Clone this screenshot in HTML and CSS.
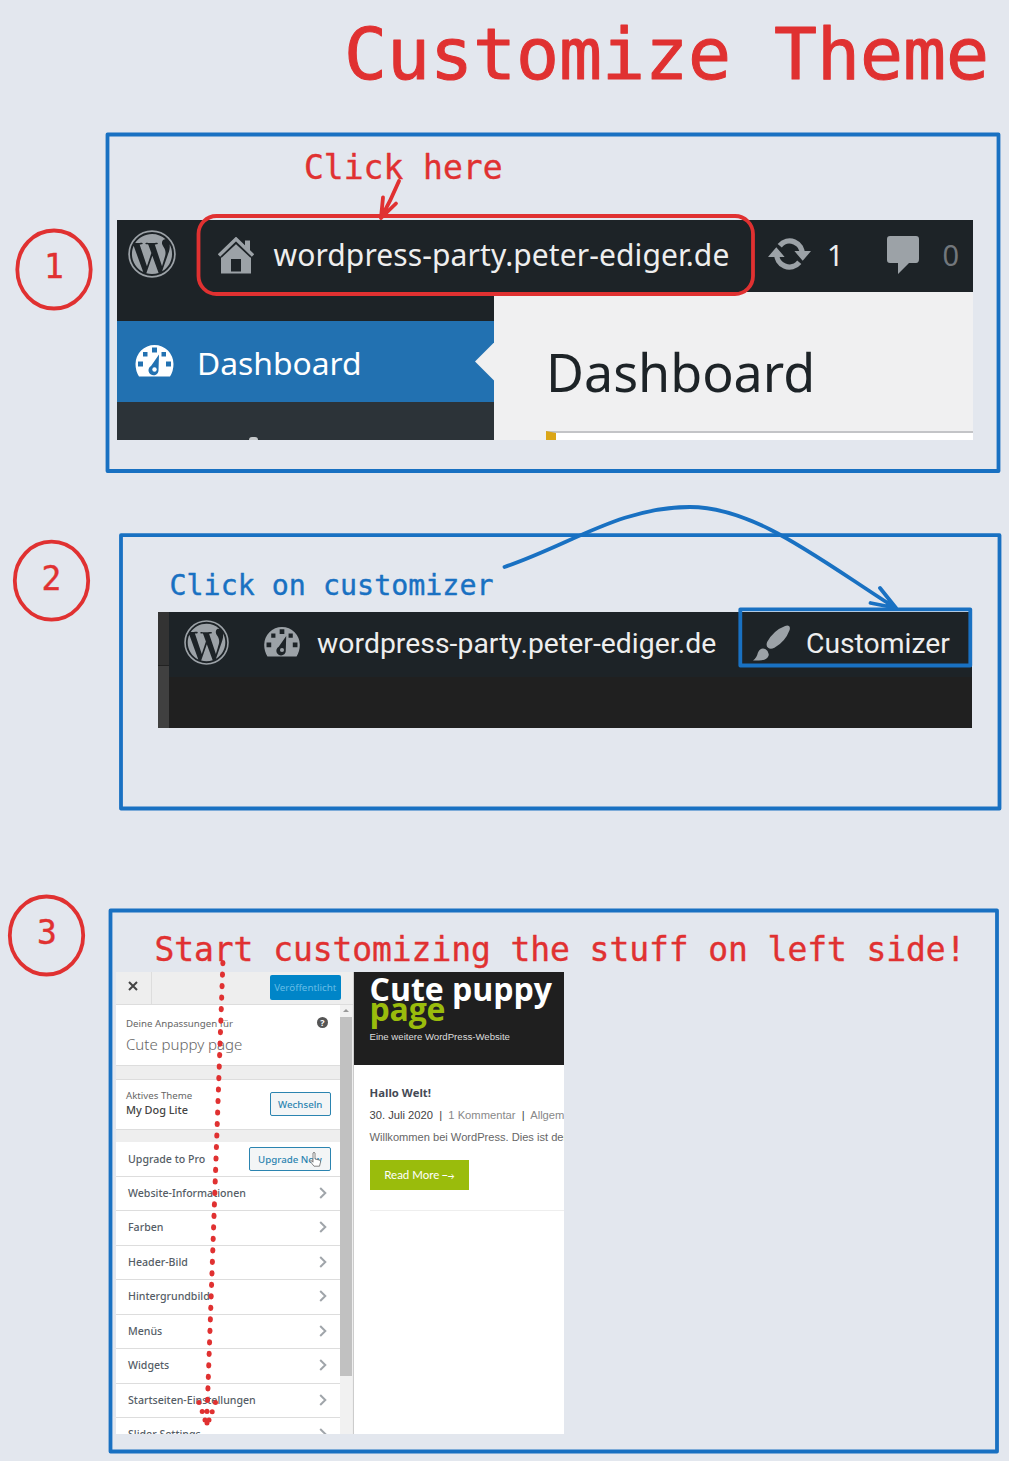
FILE: index.html
```html
<!DOCTYPE html>
<html lang="en">
<head>
<meta charset="utf-8">
<title>Customize Theme</title>
<link rel="stylesheet" href="styles.css">
</head>
<body>
<svg class="defs" width="0" height="0" aria-hidden="true">
  <symbol id="wp" viewBox="0 0 24 24">
    <circle cx="12" cy="12" r="11.45" fill="none" stroke="currentColor" stroke-width=".85"/>
    <path transform="translate(.84 .84) scale(.93)" fill="currentColor" d="M21.469 6.825c.84 1.537 1.318 3.3 1.318 5.175 0 3.979-2.156 7.456-5.363 9.325l3.295-9.527c.615-1.54.82-2.771.82-3.864 0-.405-.026-.78-.07-1.11m-7.981.105c.647-.03 1.232-.105 1.232-.105.582-.075.514-.93-.067-.899 0 0-1.755.135-2.88.135-1.064 0-2.85-.15-2.85-.15-.585-.03-.661.855-.075.885 0 0 .54.061 1.125.09l1.68 4.605-2.37 7.08L5.354 6.9c.649-.03 1.234-.1 1.234-.1.585-.075.516-.93-.065-.896 0 0-1.746.138-2.874.138-.2 0-.438-.008-.69-.015C4.911 3.15 8.235 1.215 12 1.215c2.809 0 5.365 1.072 7.286 2.833-.046-.003-.091-.009-.141-.009-1.06 0-1.812.923-1.812 1.914 0 .89.513 1.643 1.06 2.531.411.72.89 1.643.89 2.977 0 .915-.354 1.994-.821 3.479l-1.075 3.585-3.9-11.61.001.014zM12 22.784c-1.059 0-2.081-.153-3.048-.437l3.237-9.406 3.315 9.087c.024.053.05.101.078.149-1.12.393-2.325.609-3.582.609M1.211 12c0-1.564.336-3.05.935-4.39L7.29 21.709C3.694 19.96 1.212 16.271 1.211 12"/>
  </symbol>
  <symbol id="gauge" viewBox="0 0 38 32">
    <path fill="currentColor" fill-rule="evenodd" d="M19 0A19 19 0 0 1 38 19Q38 26 34.500 31.500H3.500Q0 26 0 19A19 19 0 0 1 19 0ZM16.500 2.500v5h5v-5ZM7.500 7v4.500h4.500V7ZM26 7v4.500h4.500V7ZM2.500 16.500v5h5v-5ZM30.500 16.500v5h5v-5ZM23.500 9.500L15.500 21A5 5 0 1 0 23 25.500Z"/>
    <circle cx="19" cy="24.500" r="2.200" fill="currentColor"/>
  </symbol>
  <symbol id="chev" viewBox="0 0 8 12">
    <path d="M1.200 1L6.300 6L1.200 11" fill="none" stroke="currentColor" stroke-width="2"/>
  </symbol>
</svg>

<main class="board">
  <section class="shot shot-admin">
    <header class="bar">
      <svg class="logo"><use href="#wp"/></svg>
      <svg class="home" viewBox="0 0 36 37"><path fill="currentColor" fill-rule="evenodd" d="M3 20L18 6L33 20V36.500H3ZM13 22v12.500h10V22Z"/><path d="M1.500 18.500L18 3L34.500 18.500" fill="none" stroke="#1d2327" stroke-width="6"/><path d="M1 18.500L18 2L35 18.500" fill="none" stroke="currentColor" stroke-width="3.400"/><path fill="currentColor" d="M27 3.500h5V14L27 9Z"/></svg>
      <span class="site">wordpress-party.peter-ediger.de</span>
      <svg class="refresh" viewBox="0 0 44 34"><g fill="none" stroke="currentColor" stroke-width="5.500"><path d="M12 8.500A13 13 0 0 1 35 18"/><path d="M32 25.500A13 13 0 0 1 9 16"/></g><path fill="currentColor" d="M27 14H44L35.500 24ZM0 20H17L8.500 10Z"/></svg>
      <span class="count">1</span>
      <svg class="comment" viewBox="0 0 32 38"><path fill="currentColor" d="M3 0H29Q32 0 32 3V23Q32 27 29 27H22L11 38V27H3Q0 27 0 24V3Q0 0 3 0Z"/></svg>
      <span class="count dim">0</span>
    </header>
    <div class="admin-body">
      <nav class="side">
        <div class="side-active"><svg class="gauge"><use href="#gauge"/></svg><span>Dashboard</span></div>
        <i class="side-peek"></i>
      </nav>
      <div class="admin-main"><h2>Dashboard</h2><div class="notice"></div></div>
    </div>
  </section>

  <section class="shot shot-site">
    <div class="strip"><i></i><i></i></div>
    <div class="site-main">
      <header class="bar bar-small">
        <svg class="logo"><use href="#wp"/></svg>
        <svg class="gauge"><use href="#gauge"/></svg>
        <span class="site">wordpress-party.peter-ediger.de</span>
        <svg class="brush" viewBox="0 0 38 36"><path fill="currentColor" d="M37 .5Q38.500 2 37.500 5Q33 17 22 23Q18 25 15.500 23Q13 21 14.500 17Q21 5 33 .5Q35.500-.5 37 .5ZM13 24.500Q17 27 16 31Q14 36 6 36H0Q4 33 5 28Q8 22 13 24.500Z"/></svg>
        <span class="cust">Customizer</span>
      </header>
    </div>
  </section>

  <section class="shot shot-customizer">
    <div class="controls">
      <header class="ctl-head">
        <span class="close"><svg viewBox="0 0 10 10"><path d="M1 1L9 9M9 1L1 9" stroke="#444" stroke-width="2"/></svg></span>
        <span class="publish">Veröffentlicht</span>
      </header>
      <div class="ctl-body">
        <div class="ctl-list">
          <div class="intro">
            <div><p class="note">Deine Anpassungen für</p><p class="name">Cute puppy page</p></div>
            <span class="help">?</span>
          </div>
          <div class="theme">
            <div><p class="note">Aktives Theme</p><p class="theme-name">My Dog Lite</p></div>
            <span class="btn">Wechseln</span>
          </div>
          <div class="row row-pro"><span>Upgrade to Pro</span><span class="btn btn-pro">Upgrade Now</span></div>
          <div class="row"><span>Website-Informationen</span><svg><use href="#chev"/></svg></div>
          <div class="row"><span>Farben</span><svg><use href="#chev"/></svg></div>
          <div class="row"><span>Header-Bild</span><svg><use href="#chev"/></svg></div>
          <div class="row"><span>Hintergrundbild</span><svg><use href="#chev"/></svg></div>
          <div class="row"><span>Menüs</span><svg><use href="#chev"/></svg></div>
          <div class="row"><span>Widgets</span><svg><use href="#chev"/></svg></div>
          <div class="row"><span>Startseiten-Einstellungen</span><svg><use href="#chev"/></svg></div>
          <div class="row"><span>Slider Settings</span><svg><use href="#chev"/></svg></div>
        </div>
        <div class="scroll"><i class="up"></i><i class="thumb"></i></div>
      </div>
    </div>
    <div class="preview">
      <header><h3>Cute puppy <b>page</b></h3><p>Eine weitere WordPress-Website</p></header>
      <article>
        <h4>Hallo Welt!</h4>
        <p class="meta"><span>30. Juli 2020</span> &nbsp;|&nbsp; <em>1 Kommentar</em> &nbsp;|&nbsp; <em>Allgemein</em></p>
        <p class="body">Willkommen bei WordPress. Dies ist dein</p>
        <span class="more">Read More ⤍</span>
        <hr>
      </article>
    </div>
  </section>

  <svg class="ink" viewBox="0 0 1009 1461" width="1009" height="1461">
    <g class="blue">
      <rect x="107.500" y="134.500" width="891" height="336.500"/>
      <rect x="121" y="535.200" width="878.500" height="273.300"/>
      <rect x="110.500" y="910.500" width="886.500" height="541"/>
      <rect x="740.300" y="609.300" width="230" height="56.200"/>
      <path d="M504.500 567C570 545 620 507 690 507C755 507 820 560 894 607M880 588L896 608L870.500 603"/>
    </g>
    <g class="red">
      <rect x="198.500" y="216" width="554.500" height="78" rx="18"/>
      <ellipse cx="54" cy="269.500" rx="36.700" ry="39"/>
      <ellipse cx="51.500" cy="580.700" rx="36.700" ry="39"/>
      <ellipse cx="46.500" cy="935.500" rx="36.700" ry="39"/>
      <path d="M399 181Q391 200 381 218M383 197.500L381 218L396 203.500"/>
      <path class="dots" d="M222.900 962.500L207.500 1401"/>
      <path class="dots" d="M199 1402.500v.1M202.200 1411.500v.1M205 1420v.1M215.500 1402.500v.1M212.200 1411.700v.1M209 1420v.1M207 1411.300v.1M207 1423v.1"/>
    </g>
    <path d="M313 1153q1-1.500 2 0v6l5 1.200q.8.500.5 2l-1 4h-5.500l-4-5q.5-1.500 2 0l1 1Z" fill="#fff" stroke="#666" stroke-width=".8"/>
    <g class="hand red-text">
      <text class="title" x="344" y="79" font-size="71.500" textLength="645">Customize Theme</text>
      <text x="304" y="179" font-size="33" textLength="198.500">Click here</text>
      <text x="154.500" y="961" font-size="33" textLength="811">Start customizing the stuff on left side!</text>
      <text x="44" y="277.500" font-size="33">1</text>
      <text x="41.500" y="589.500" font-size="33">2</text>
      <text x="37" y="944" font-size="33">3</text>
    </g>
    <g class="hand blue-text">
      <text x="169.500" y="595" font-size="28.300" textLength="324">Click on customizer</text>
    </g>
  </svg>
</main>
</body>
</html>
```

FILE: styles.css
```css
* { box-sizing: border-box; margin: 0; padding: 0; }
body { background: #e3e7ee; }
.defs { position: absolute; }
.board { position: relative; width: 1009px; height: 1461px; overflow: hidden; }
svg { display: block; flex: none; }
span { white-space: nowrap; }

/* screenshots pinned on the canvas */
.shot { position: absolute; overflow: hidden; }
.bar { display: flex; align-items: center; background: #1d2327; color: #9ca2a7; }
.bar .site { color: #eee; }

.shot-admin { left: 116.500px; top: 220px; width: 856.500px; height: 219.500px; font-family: "Noto Sans", sans-serif; }
.shot-admin .bar { height: 72px; padding-left: 11.500px; }
.logo { width: 48px; height: 48px; margin-top: -4px; }
.home { width: 36px; height: 37px; margin-left: 41.500px; margin-top: -2px; }
.shot-admin .site { width: 457px; margin-left: 20px; margin-top: -3px; font-size: 30px; letter-spacing: .1px; }
.refresh { width: 43px; height: 34px; margin-left: 37.500px; margin-top: -4px; }
.count { margin-left: 16px; margin-top: -3px; font-size: 29px; color: #eee; }
.comment { width: 32px; height: 38px; margin-left: 43px; margin-top: -2px; }
.count.dim { margin-left: 24px; color: #72777c; }
.admin-body { display: flex; height: 147.500px; }
.side { width: 377.500px; padding-top: 29px; background: linear-gradient(#1d2327 29px, #2c3338 29px); }
.side-active { display: flex; align-items: center; height: 81px; padding-left: 18.500px; background: #2271b1; color: #fff; font-size: 31.800px; }
.side-active::after { content: ""; width: 19px; height: 38px; margin-left: auto; background: #f0f0f1; clip-path: polygon(0 50%, 100% 0, 100% 100%); }
.side-active .gauge { width: 39px; height: 32px; margin-top: -2px; }
.side-active span { margin-left: 23px; margin-top: 1px; }
.side-peek { display: block; width: 9px; height: 3px; margin: 35px 0 0 132px; background: #c5c8ca; border-radius: 4px 4px 0 0; }
.admin-main { flex: 1; background: #f0f0f1; padding-left: 52px; display: flex; flex-direction: column; }
.admin-main h2 { font-size: 52px; font-weight: 400; line-height: 60px; margin-top: 50px; letter-spacing: 0; color: #1d2327; }
.notice { flex: 1; margin-top: 29px; background: #fff; border-top: 2px solid #c3c4c7; border-left: 10px solid #dba617; }

.shot-site { left: 158px; top: 612px; width: 814px; height: 115.500px; display: flex; font-family: Roboto, sans-serif; }
.strip { width: 11px; display: flex; flex-direction: column; background: #404040; }
.strip i:first-child { height: 54px; background: #333; border-bottom: 1px solid #222; }
.site-main { flex: 1; background: #202020; }
.bar-small { height: 65px; padding-left: 15px; }
.bar-small .logo { width: 45px; height: 45px; }
.bar-small .gauge { width: 36px; height: 30px; margin-left: 35px; margin-top: -5px; }
.bar-small .site { width: 400px; margin-left: 17px; margin-top: -2px; font-size: 28.300px; letter-spacing: .05px; }
.brush { width: 37px; height: 36px; margin-left: 36px; margin-top: -4px; }
.cust { margin-left: 16px; margin-top: -2px; font-size: 28.300px; color: #eee; }

.shot-customizer { left: 116px; top: 972px; width: 447.500px; height: 462px; display: flex; background: #fff; font-family: "Noto Sans", sans-serif; }
.controls { width: 237.500px; border-right: 1.500px solid #ccc; background: #eee; }
.ctl-head { display: flex; align-items: flex-start; height: 33px; border-bottom: 1px solid #ddd; }
.close { width: 36px; height: 32px; padding: 9px 12px; border-right: 1px solid #ddd; }
.close svg { width: 10px; height: 10px; }
.publish { width: 71.500px; height: 24.500px; margin: 3px 0 0 117.500px; border-radius: 2px; background: #0085c8; color: #66bde6; font-size: 9.800px; line-height: 25px; text-align: center; }
.ctl-body { display: flex; height: 429px; }
.ctl-list { width: 224px; overflow: hidden; color: #555d66; }
.intro, .theme { display: flex; justify-content: space-between; background: #fff; border-bottom: 1px solid #ddd; padding: 0 9px 0 10px; }
.intro { height: 61px; padding-top: 10px; }
.note { font-size: 9.700px; line-height: 18px; color: #666; }
.name { font-size: 15px; line-height: 22px; font-weight: 300; color: #666; }
.help { width: 11px; height: 11px; margin: 2px 3px 0 0; border-radius: 50%; background: #555; color: #fff; font-size: 9px; font-weight: 700; line-height: 11px; text-align: center; }
.theme { height: 51px; margin: 13px 0 12px; border-top: 1px solid #ddd; padding-top: 9px; }
.theme .note { line-height: 14px; }
.theme-name { font-size: 10.900px; line-height: 14px; font-weight: 500; color: #444; }
.btn { width: 61.500px; height: 24px; margin-top: 3px; border: 1px solid #2b84b0; border-radius: 2px; background: #f3f5f6; color: #2b84b0; font-size: 9.700px; font-weight: 500; line-height: 23px; text-align: center; }
.row { display: flex; align-items: center; justify-content: space-between; height: 34.500px; padding: 0 13px 1px 12px; background: #fff; border-bottom: 1px solid #ddd; font-size: 10.600px; font-weight: 500; }
.row svg { width: 8px; height: 12px; color: #a0a5aa; }
.row-pro { padding-right: 9px; padding-bottom: 0; }
.btn-pro { width: 82px; margin-top: 0; padding-left: 0; }
.scroll { width: 12px; background: #f1f1f1; }
.up { display: block; margin: 4px 3px; border: 3px solid transparent; border-top: 0; border-bottom-color: #999; }
.thumb { display: block; height: 359px; margin-top: 5px; background: #c1c1c1; }

.preview { flex: 1; min-width: 0; overflow: hidden; font-family: "Liberation Sans", sans-serif; }
.preview header { height: 93px; padding: 7px 0 0 16px; background: #1f1f1f; color: #fff; white-space: nowrap; }
.preview h3 { width: 194px; font: 700 32px/20px "Open Sans", sans-serif; letter-spacing: 0; white-space: normal; }
.preview h3 b { display: block; color: #9abc0c; font-weight: 700; letter-spacing: -.2px; }
.preview header p { margin-top: 12px; font-size: 9.600px; line-height: 12px; color: #ddd; }
.preview article { padding: 20px 0 0 16px; white-space: nowrap; color: #666; }
.preview h4 { font: 700 11.300px/15px "Open Sans", sans-serif; color: #444a55; }
.meta { margin-top: 8px; font-size: 11.200px; line-height: 14px; color: #444; }
.meta em { font-style: normal; color: #888; }
.body { margin-top: 8px; font-size: 11.100px; line-height: 14px; }
.more { display: block; width: 99.500px; height: 30px; margin-top: 16px; background: #9abc0c; color: #fff; font: 11.500px/30px Lato, sans-serif; text-align: center; }
.preview hr { margin-top: 20px; border: 0; border-top: 1px solid #eee; }

/* pen annotations over the screenshots */
.ink { position: absolute; inset: 0; }
.blue, .red { fill: none; stroke-width: 3.800; stroke-linecap: round; stroke-linejoin: round; }
.blue { stroke: #1971c2; }
.red { stroke: #e03131; }
.dots { stroke-width: 5; stroke-dasharray: 1.200 10.300; }
.hand { font-family: "DejaVu Sans Mono", monospace; stroke-width: .4; stroke-linejoin: round; }
.hand .title { stroke-width: 1; }
.red-text { fill: #e03131; stroke: #e03131; }
.blue-text { fill: #1971c2; stroke: #1971c2; }
```
